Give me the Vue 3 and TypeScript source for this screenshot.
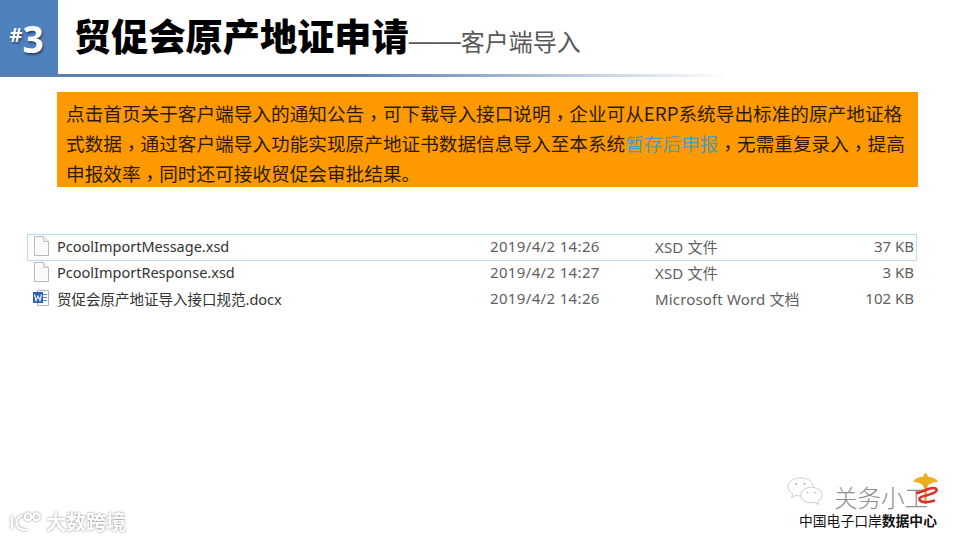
<script setup lang="ts">
interface FileRow { name: string; date: string; type: string; size: string; kind: 'plain' | 'word'; selected?: boolean }
const files: FileRow[] = [
  { name: 'PcoolImportMessage.xsd', date: '2019/4/2 14:26', type: 'XSD 文件', size: '37 KB', kind: 'plain', selected: true },
  { name: 'PcoolImportResponse.xsd', date: '2019/4/2 14:27', type: 'XSD 文件', size: '3 KB', kind: 'plain' },
  { name: '贸促会原产地证导入接口规范.docx', date: '2019/4/2 14:26', type: 'Microsoft Word 文档', size: '102 KB', kind: 'word' },
]
</script>

<template>
  <div class="slide">
    <header class="head">
      <div class="badge"><span class="hash">#</span><span class="num">3</span></div>
      <h1 class="title">贸促会原产地证申请<span class="sub"><span class="dash">——</span>客户端导入</span></h1>
    </header>
    <div class="rule"></div>

    <p class="note">点击首页关于客户端导入的通知公告<span class="cm">，</span>可下载导入接口说明<span class="cm">，</span>企业可从ERP系统导出标准的原产地证格式数据<span class="cm">，</span>通过客户端导入功能实现原产地证书数据信息导入至本系统<span class="hl">暂存后申报</span><span class="cm">，</span>无需重复录入<span class="cm">，</span>提高申报效率<span class="cm">，</span>同时还可接收贸促会审批结果。</p>

    <section class="files">
      <div v-for="f in files" :key="f.name" class="row" :class="{ selected: f.selected }">
        <svg v-if="f.kind === 'plain'" class="ficon" viewBox="0 0 16 20" width="16" height="20">
          <path d="M1.5 .5H10.5L15.5 5.5V19.5H1.5Z" fill="#fafafa" stroke="#b9b9b9" />
          <path d="M10.5 .5V5.5H15.5" fill="#f0f0f0" stroke="#c4c4c4" />
        </svg>
        <svg v-else class="ficon" viewBox="0 0 16 20" width="16" height="20">
          <path d="M4.5 2.5H15.5V17.5H4.5Z" fill="#fff" stroke="#a9b6c8" />
          <path d="M10 6.5H14M10 9.5H14M10 12.5H14" stroke="#5b87c4" stroke-width="1.2" />
          <rect x="0" y="4" width="10" height="11" fill="#2b5fb3" />
          <path d="M1.5 6.5L3 12.5L5 8L7 12.5L8.5 6.5" fill="none" stroke="#fff" stroke-width="1.1" />
        </svg>
        <span class="name">{{ f.name }}</span>
        <span class="date">{{ f.date }}</span>
        <span class="type">{{ f.type }}</span>
        <span class="size">{{ f.size }}</span>
      </div>
    </section>

    <div class="wm-left">
      <svg viewBox="0 0 40 24" width="38" height="23" class="wm-logo">
        <g fill="none" stroke="#fff" stroke-width="2.4">
          <path d="M4 5V19" />
          <path d="M15 4Q8 8 9 13Q10 20 20 20" />
          <circle cx="21" cy="6" r="3.5" />
          <circle cx="30" cy="6" r="3.5" />
        </g>
      </svg>
      <span class="wm-text">大数跨境</span>
    </div>

    <div class="wm-right">
      <div class="wm-top">
        <svg class="wechat" viewBox="0 0 40 36" width="39" height="31" preserveAspectRatio="none">
          <g fill="#fff" stroke="#c2c2c2" stroke-width=".9">
            <path d="M15 1C7.5 1 2 5.6 2 11.5C2 15 4 17.8 7 19.6L5.6 24L10.4 21.3C11.8 21.7 13.4 22 15 22C22.5 22 28 17.2 28 11.5C28 5.6 22.5 1 15 1Z" />
            <path d="M26 12C19.6 12 15 16 15 21C15 26 19.6 30 26 30C27.2 30 28.4 29.8 29.5 29.5L33.5 32L32.5 28.4C35.2 26.7 37 24 37 21C37 16 32.4 12 26 12Z" />
          </g>
          <g fill="#bdbdbd">
            <circle cx="10.5" cy="8" r="1.2" /><circle cx="19" cy="8" r="1.2" />
            <circle cx="22" cy="18" r="1" /><circle cx="30" cy="18" r="1" />
          </g>
        </svg>
        <span class="gw">关务小工</span>
      </div>
      <svg class="emblem" viewBox="0 0 25 33" width="25" height="33">
        <path d="M0 9C2 5 6 4 10 4C10.500 2 11 1 12.500 0C14 1 14.500 2 15 4C19 4 23 5 25 9C22 8.500 18 9.500 15 12.500L14 15H11L10 12.500C7 9.500 3 8.500 0 9Z" fill="#edae1c" />
        <path d="M12.500 12V31" stroke="#e39f1c" stroke-width="2.200" />
        <path d="M3 20C7 20 12 17 17 15.500C21 14.500 24 15 23.500 17.500C23 20 17 21.500 13 22.500C8 23.500 5 25 7 27.500C9 29.500 15 29.500 22 27.500" fill="none" stroke="#d8302a" stroke-width="2.600" />
      </svg>
      <div class="org">中国电子口岸<b>数据中心</b></div>
    </div>
  </div>
</template>

<style>
html, body { margin: 0; background: #fff; }
</style>

<style scoped>
.slide {
  position: relative;
  width: 960px;
  height: 540px;
  overflow: hidden;
  background: #fff;
  font-family: "Noto Sans", "Noto Sans CJK SC", sans-serif;
}
.head { display: flex; height: 74px; }
.badge {
  width: 58px;
  background: #4f81bd;
  color: #fff;
  display: flex;
  align-items: center;
  justify-content: center;
  padding: 3px 5px 0 0;
  box-sizing: border-box;
  font-family: "Noto Sans", sans-serif;
  font-weight: 700;
  text-shadow: 1px 2px 2px rgba(0, 0, 0, .45);
}
.hash { font-size: 20px; margin-bottom: 8px; }
.num { font-size: 37px; line-height: 1; }
.title {
  margin: -2px 0 0 16px;
  font-size: 37.2px;
  line-height: 74px;
  font-weight: 900;
  color: #000;
  font-family: "Noto Sans CJK SC", sans-serif;
  white-space: nowrap;
}
.sub { font-size: 24px; font-weight: 400; color: #595959; }
.dash { font-size: 26px; font-family: "Liberation Sans", sans-serif; position: relative; top: -1px; }
.rule {
  height: 3px;
  width: 730px;
  background: linear-gradient(90deg, #5a80b0 0, #5a80b0 48%, rgba(90, 128, 176, 0) 100%);
}
.note {
  margin: 15px 42px 0 57px;
  padding: 6px 10px 0 9px;
  height: 95px;
  box-sizing: border-box;
  background: #ff9900;
  color: #2a1b00;
  font-size: 18.65px;
  line-height: 30px;
  font-family: "Noto Sans CJK SC", sans-serif;
  font-weight: 400;
}
.hl { color: #4f9bb5; }
.cm { font-family: "Noto Sans CJK TC", sans-serif; line-height: 1; vertical-align: -4px; }
.files { margin: 47px 43px 0 27px; color: #444; font-size: 14.5px; }
.row {
  display: grid;
  grid-template-columns: 30px 433px 165px 1fr 70px;
  align-items: center;
  height: 26px;
  padding: 0 3px 4px 0;
  box-sizing: border-box;
}
.row.selected { box-shadow: inset 0 0 0 1px #bcdcf2; height: 27px; padding-top: 1px; padding-bottom: 4px; }
.ficon { margin-left: 6px; }
.name { color: #333; }
.date, .type, .size { color: #5f5f5f; font-size: 15px; }
.date { letter-spacing: .35px; }
.type { letter-spacing: .15px; }
.size { text-align: right; }
.wm-left {
  position: absolute;
  left: 8px;
  top: 508px;
  display: flex;
  align-items: center;
  filter: drop-shadow(0 0 1px #8a8a8a);
}
.wm-text { color: #fff; font-size: 20px; line-height: 28px; font-family: "Noto Sans CJK SC", sans-serif; font-weight: 700; }
.wm-right { position: absolute; left: 786px; top: 474px; width: 170px; }
.wm-top { display: flex; align-items: center; height: 38px; }
.wechat { flex: none; margin-top: -2px; }
.gw {
  margin-left: 9px;
  font-size: 23.5px;
  line-height: 30px;
  color: #8e8e8e;
  font-family: "Noto Sans CJK SC", sans-serif;
  font-weight: 300;
  white-space: nowrap;
  margin-top: 8px;
}
.emblem { position: absolute; left: 127px; top: -1px; }
.org {
  margin-left: 13px;
  font-size: 13.8px;
  line-height: 16px;
  color: #111;
  white-space: nowrap;
  font-family: "Noto Sans CJK SC", sans-serif;
}
</style>
